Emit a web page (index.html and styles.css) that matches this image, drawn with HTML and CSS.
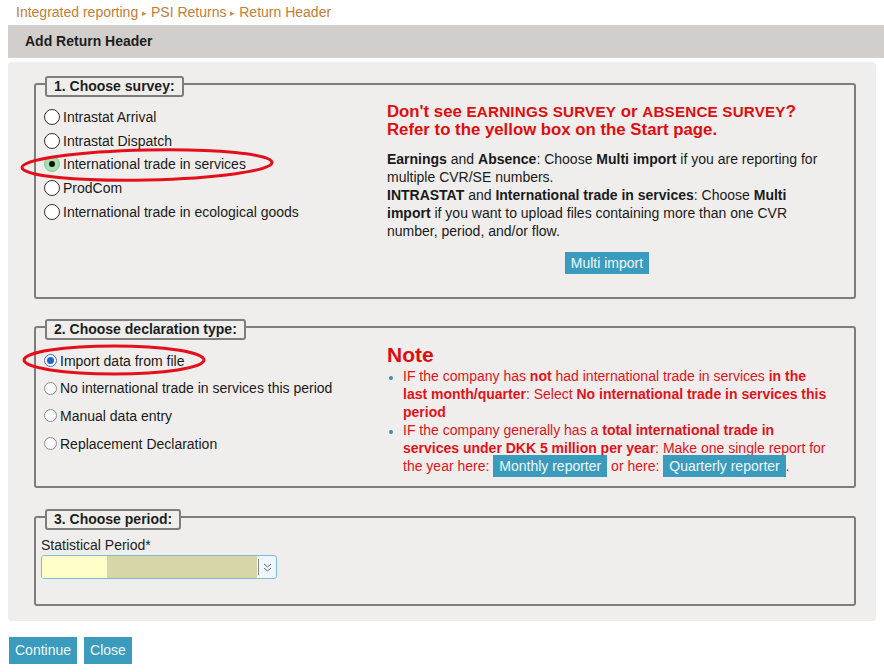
FILE: index.html
```html
<!DOCTYPE html>
<html>
<head>
<meta charset="utf-8">
<link rel="stylesheet" href="styles.css">
</head>
<body>
<div class="crumb">Integrated reporting <span class="sep">▸</span> PSI Returns <span class="sep">▸</span> Return Header</div>
<div class="header">Add Return Header</div>
<div class="panel">
  <div class="group g1">
    <div class="legend">1. Choose survey:</div>
    <div class="gbody">
      <div class="lcol">
        <label class="row r1"><span class="rad"></span>Intrastat Arrival</label>
        <label class="row r1"><span class="rad"></span>Intrastat Dispatch</label>
        <label class="row r1"><span class="rad on"></span>International trade in services</label>
        <label class="row r1"><span class="rad"></span>ProdCom</label>
        <label class="row r1"><span class="rad"></span>International trade in ecological goods</label>
      </div>
      <div class="rcol rc1">
        <div class="warn">Don't see <span class="caps">EARNINGS SURVEY</span> or <span class="caps">ABSENCE SURVEY</span>?<br>Refer to the yellow box on the Start page.</div>
        <div class="info"><b>Earnings</b> and <b>Absence</b>: Choose <b>Multi import</b> if you are reporting for multiple CVR/SE numbers.<br><b>INTRASTAT</b> and <b>International trade in services</b>: Choose <b>Multi import</b> if you want to upload files containing more than one CVR number, period, and/or flow.</div>
        <div class="center"><span class="btn mbtn">Multi import</span></div>
      </div>
    </div>
  </div>
  <div class="group g2">
    <div class="legend">2. Choose declaration type:</div>
    <div class="gbody">
      <div class="lcol lc2">
        <label class="row r2"><span class="rad2 on"></span>Import data from file</label>
        <label class="row r2"><span class="rad2"></span>No international trade in services this period</label>
        <label class="row r2"><span class="rad2"></span>Manual data entry</label>
        <label class="row r2"><span class="rad2"></span>Replacement Declaration</label>
      </div>
      <div class="rcol rc2">
        <div class="note">Note</div>
        <ul class="notes">
          <li>IF the company has <b>not</b> had international trade in services <b>in the last month/quarter</b>: Select <b>No international trade in services this period</b></li>
          <li>IF the company generally has a <b>total international trade in services under DKK 5 million per year</b>: Make one single report for the year here: <span class="ibtn">Monthly reporter</span> or here: <span class="ibtn">Quarterly reporter</span>.</li>
        </ul>
      </div>
    </div>
  </div>
  <div class="group g3">
    <div class="legend">3. Choose period:</div>
    <div class="plabel">Statistical Period*</div>
    <div class="select">
      <span class="sa"></span><span class="sb"></span><span class="sdiv"></span>
      <span class="sarrow"><svg width="9" height="11" viewBox="0 0 9 11"><path d="M1 2 L4.5 5 L8 2 M1 6 L4.5 9 L8 6" fill="none" stroke="#666" stroke-width="1"/></svg></span>
    </div>
  </div>
</div>
<div class="actions">
  <span class="btn abtn">Continue</span>
  <span class="btn abtn">Close</span>
</div>
<svg class="marks" width="884" height="672" viewBox="0 0 884 672">
  <ellipse cx="147" cy="165" rx="125" ry="15" fill="none" stroke="#e3101c" stroke-width="3" transform="rotate(-1.2 147 165)"/>
  <ellipse cx="114" cy="360" rx="90" ry="14" fill="none" stroke="#e3101c" stroke-width="3"/>
</svg>
</body>
</html>
```

FILE: styles.css
```css
* { box-sizing: border-box; }
body {
  margin: 0;
  background: #fff;
  font-family: "Liberation Sans", Arial, sans-serif;
  font-size: 14px;
  color: #1a1a1a;
  position: relative;
  width: 884px;
  height: 672px;
  overflow: hidden;
}
.crumb {
  height: 25px;
  padding: 3px 0 0 16px;
  line-height: 18px;
  color: #c27d36;
}
.sep { font-size: 9px; color: #c98a4a; vertical-align: 1px; }
.header {
  margin-left: 8px;
  height: 33px;
  line-height: 33px;
  padding-left: 17px;
  background: #d1cecb;
  font-weight: bold;
  color: #1e1e1e;
}
.panel {
  margin: 4px 8px 0 8px;
  background: #efeeed;
  border-radius: 4px;
  padding: 21px 20px 15px 26px;
}
.group {
  border: 2px solid #7d7d7d;
  border-radius: 3px;
  padding: 0 0 0 5px;
}
.legend {
  display: block;
  width: fit-content;
  margin: -9px 0 0 4px;
  height: 21px;
  line-height: 17px;
  padding: 0 7px;
  border: 2px solid #7d7d7d;
  border-radius: 3px;
  background: #efeeed;
  font-weight: bold;
  color: #1e1e1e;
}
.gbody { display: flex; }
.lcol { width: 346px; }
.rcol { width: 440px; }
.g1 .lcol { padding-top: 8px; }
.g1 .rcol { padding-top: 6px; padding-bottom: 23px; }
.row { display: flex; align-items: center; white-space: nowrap; }
.r1 { height: 23.75px; }
.rad {
  width: 16px; height: 16px;
  border: 1px solid #333;
  border-radius: 50%;
  background: #fff;
  margin: 0 3px 0 3px;
  flex: none;
  display: flex; align-items: center; justify-content: center;
}
.rad.on { background: #a9dfae; border-color: #8fbf95; }
.rad.on::after { content: ""; width: 6px; height: 6px; border-radius: 50%; background: #111; }
.warn {
  color: #e00d0d;
  font-weight: bold;
  font-size: 16.8px;
  line-height: 18px;
}
.caps { font-size: 15.2px; letter-spacing: 0.2px; }
.info {
  margin-top: 11px;
  font-size: 14px;
  line-height: 18px;
  color: #1a1a1a;
}
.center { text-align: center; margin-top: 12px; }
.btn {
  display: inline-block;
  background: #3b9bbd;
  color: #eef8fb;
  font-size: 14px;
}
.mbtn { height: 22px; line-height: 22px; padding: 0 6px; }
.g2 { margin-top: 27px; }
.lc2 { padding-top: 7px; }
.r2 { height: 27.6px; }
.rad2 {
  width: 13px; height: 13px;
  border: 1px solid #8a8a8a;
  border-radius: 50%;
  background: #fbfbfb;
  margin: 0 3px 0 3px;
  flex: none;
  display: flex; align-items: center; justify-content: center;
}
.rad2.on { border-color: #3b72b8; background: #fff; }
.rad2.on::after { content: ""; width: 7px; height: 7px; border-radius: 50%; background: #1f66c4; }
.rc2 { padding-top: 4px; padding-bottom: 11px; }
.note {
  color: #e00d0d;
  font-weight: bold;
  font-size: 21px;
  line-height: 22px;
}
.notes {
  margin: 1px 0 0 0;
  padding: 0 0 0 16px;
  color: #e3121a;
  font-size: 14px;
  line-height: 18px;
  width: 440px;
}
.notes li::marker { color: #3a8db2; font-size: 12px; }
.ibtn {
  background: #3b9bbd;
  color: #eef8fb;
  font-size: 14px;
  padding: 3px 6px 3px 6px;
}
.g3 { margin-top: 28px; padding-bottom: 25px; }
.plabel { margin-top: 6px; line-height: 18px; color: #1e1e1e; }
.select {
  margin-top: 1px;
  width: 236px;
  height: 24px;
  border: 1px solid #7cbdd3;
  border-radius: 3px;
  background: #eef7fa;
  display: flex;
  align-items: stretch;
  overflow: hidden;
}
.sa { width: 65px; background: #ffffc8; }
.sb { width: 150px; background: #d6d6a9; }
.sdiv { width: 1px; background: #8a8a8a; margin: 3px 0 3px 1px; }
.sarrow { flex: 1; display: flex; align-items: center; justify-content: center; }
.actions { margin: 16px 0 0 9px; display: flex; gap: 7px; }
.abtn { height: 27px; line-height: 27px; padding: 0 6px; }
.marks { position: absolute; left: 0; top: 0; pointer-events: none; }
```
